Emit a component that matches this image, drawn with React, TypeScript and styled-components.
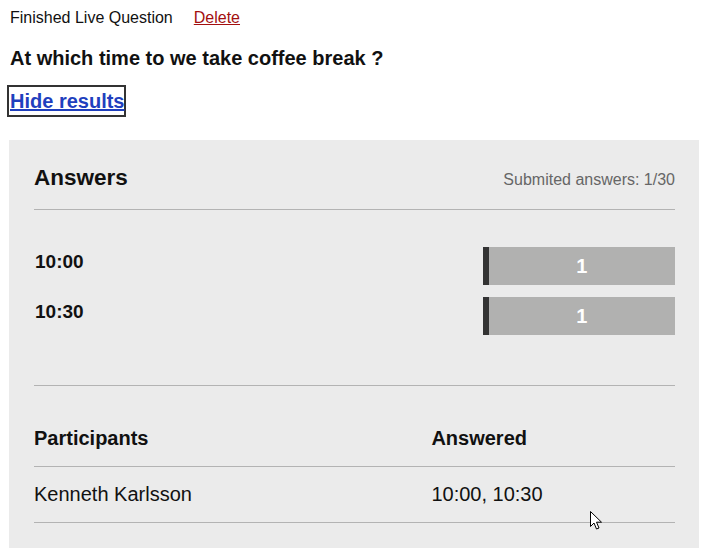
import React from 'react';
import styled, { createGlobalStyle } from 'styled-components';

const answers = [
  { label: '10:00', count: 1 },
  { label: '10:30', count: 1 },
];
const maxCount = 1;

const participants = [{ name: 'Kenneth Karlsson', answered: '10:00, 10:30' }];

function App() {
  return (
    <>
      <GlobalStyle />
      <Page>
        <StatusLine>
          <span>Finished Live Question</span>
          <DeleteLink href="#">Delete</DeleteLink>
        </StatusLine>
        <Question>At which time to we take coffee break ?</Question>
        <ToggleLink href="#">Hide results</ToggleLink>

        <ResultsPanel>
          <PanelHeader>
            <PanelTitle>Answers</PanelTitle>
            <Submitted>Submited answers: 1/30</Submitted>
          </PanelHeader>

          <AnswerList>
            {answers.map((a) => (
              <AnswerRow key={a.label}>
                <AnswerLabel>{a.label}</AnswerLabel>
                <BarTrack>
                  <Bar style={{ width: `${(a.count / maxCount) * 100}%` }}>{a.count}</Bar>
                </BarTrack>
              </AnswerRow>
            ))}
          </AnswerList>

          <Table>
            <HeadCell>Participants</HeadCell>
            <HeadCell>Answered</HeadCell>
            {participants.map((p) => (
              <React.Fragment key={p.name}>
                <Cell>{p.name}</Cell>
                <Cell>{p.answered}</Cell>
              </React.Fragment>
            ))}
          </Table>
        </ResultsPanel>
      </Page>
      <Cursor width="13" height="20" viewBox="0 0 13 20">
        <path
          d="M0.5 0.5 L0.5 15.5 L4 12 L6.5 18 L9 17 L6.5 11.2 L11.5 11.2 Z"
          fill="#fff"
          stroke="#000"
          strokeWidth="1"
          strokeLinejoin="miter"
        />
      </Cursor>
    </>
  );
}

const GlobalStyle = createGlobalStyle`
  html, body {
    margin: 0;
    padding: 0;
    background: #fff;
  }
  body {
    font-family: "Liberation Sans", Arial, sans-serif;
    color: #111;
  }
`;

const Page = styled.div`
  width: 690px;
  padding: 9px 0 0 9px;
  display: flex;
  flex-direction: column;
  align-items: flex-start;
`;

const StatusLine = styled.div`
  display: flex;
  gap: 21px;
  font-size: 16px;
  line-height: 18px;
  padding-left: 1px;
`;

const DeleteLink = styled.a`
  color: #a30f0f;
  text-decoration: underline;
`;

const Question = styled.h2`
  margin: 19px 0 0 1px;
  font-size: 20px;
  line-height: 24px;
  font-weight: bold;
`;

const ToggleLink = styled.a`
  display: inline-block;
  margin: 15px 0 0 -2px;
  padding: 0 0 0 1px;
  border: 2px solid #333;
  font-size: 20px;
  line-height: 28px;
  font-weight: bold;
  color: #1f3fbe;
  text-decoration: underline;
  text-decoration-thickness: 2px;
`;

const ResultsPanel = styled.section`
  align-self: stretch;
  margin-top: 23px;
  background: #ebebeb;
  padding: 24px 24px 25px 25px;
`;

const PanelHeader = styled.div`
  display: flex;
  justify-content: space-between;
  align-items: center;
  padding-bottom: 17px;
  border-bottom: 1px solid #b3b3b3;
`;

const PanelTitle = styled.h3`
  margin: 0;
  font-size: 22.5px;
  line-height: 28px;
  font-weight: bold;
`;

const Submitted = styled.span`
  font-size: 16px;
  color: #666;
  padding-top: 3px;
`;

const AnswerList = styled.div`
  display: flex;
  flex-direction: column;
  gap: 12px;
  padding: 37px 0 50px;
  border-bottom: 1px solid #b3b3b3;
`;

const AnswerRow = styled.div`
  display: flex;
  justify-content: space-between;
  align-items: flex-start;
`;

const AnswerLabel = styled.span`
  padding: 4px 0 0 1px;
  font-size: 19px;
  line-height: 22px;
  font-weight: bold;
`;

const BarTrack = styled.div`
  width: 30%;
`;

const Bar = styled.div`
  box-sizing: border-box;
  height: 38px;
  background: #b1b1b0;
  border-left: 6px solid #333;
  color: #fff;
  font-size: 20px;
  font-weight: bold;
  display: flex;
  align-items: center;
  justify-content: center;
`;

const Table = styled.div`
  display: grid;
  grid-template-columns: 62% 38%;
  margin-top: 25px;
`;

const Cell = styled.div`
  padding: 16px 0;
  font-size: 20px;
  line-height: 23px;
  border-bottom: 1px solid #b3b3b3;
`;

const HeadCell = styled(Cell)`
  font-weight: bold;
`;

const Cursor = styled.svg`
  position: absolute;
  left: 590px;
  top: 511px;
  pointer-events: none;
`;

export default App;
